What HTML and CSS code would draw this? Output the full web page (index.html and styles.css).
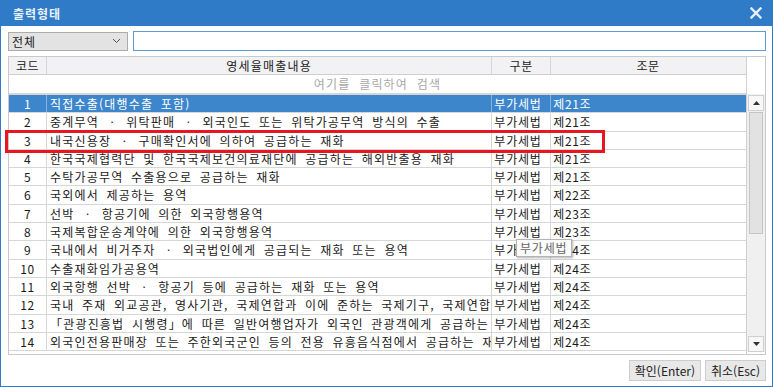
FILE: index.html
```html
<!DOCTYPE html>
<html lang="ko">

<head>
  <meta charset="UTF-8">
  <meta name="viewport" content="width=device-width, initial-scale=1.0">
  <title>출력형태</title>
  <link rel="stylesheet" href="styles.css">
</head>

<body>
  <div class="window">
    <div class="titlebar">
      <span class="title">출력형태</span>
      <svg class="close" width="12" height="12" viewBox="0 0 12 12">
        <path d="M1.5 1.5 L10.5 10.5 M10.5 1.5 L1.5 10.5" stroke="#e4eef8" stroke-width="2.4" stroke-linecap="square" />
      </svg>
    </div>

    <div class="body">
      <div class="toolbar">
        <div class="select">
          <span>전체</span>
          <svg width="9" height="6" viewBox="0 0 9 6">
            <path d="M1 1 L4.5 4.5 L8 1" fill="none" stroke="#555" stroke-width="1" />
          </svg>
        </div>
        <div class="search-input"></div>
      </div>

      <div class="grid">
        <div class="grid-main">
          <div class="row head">
            <div class="cell c-code">코드</div>
            <div class="cell c-name center">영세율매출내용</div>
            <div class="cell c-type center">구분</div>
            <div class="cell c-law center">조문</div>
          </div>
          <div class="row filter">여기를 클릭하여 검색</div>

          <div class="row selected">
            <div class="cell c-code">1</div>
            <div class="cell c-name">직접수출(대행수출 포함)</div>
            <div class="cell c-type">부가세법</div>
            <div class="cell c-law">제21조</div>
          </div>
          <div class="row">
            <div class="cell c-code">2</div>
            <div class="cell c-name">중계무역 ㆍ 위탁판매 ㆍ 외국인도 또는 위탁가공무역 방식의 수출</div>
            <div class="cell c-type">부가세법</div>
            <div class="cell c-law">제21조</div>
          </div>
          <div class="row">
            <div class="cell c-code">3</div>
            <div class="cell c-name">내국신용장 ㆍ 구매확인서에 의하여 공급하는 재화</div>
            <div class="cell c-type">부가세법</div>
            <div class="cell c-law">제21조</div>
          </div>
          <div class="row">
            <div class="cell c-code">4</div>
            <div class="cell c-name">한국국제협력단 및 한국국제보건의료재단에 공급하는 해외반출용 재화</div>
            <div class="cell c-type">부가세법</div>
            <div class="cell c-law">제21조</div>
          </div>
          <div class="row">
            <div class="cell c-code">5</div>
            <div class="cell c-name">수탁가공무역 수출용으로 공급하는 재화</div>
            <div class="cell c-type">부가세법</div>
            <div class="cell c-law">제21조</div>
          </div>
          <div class="row">
            <div class="cell c-code">6</div>
            <div class="cell c-name">국외에서 제공하는 용역</div>
            <div class="cell c-type">부가세법</div>
            <div class="cell c-law">제22조</div>
          </div>
          <div class="row">
            <div class="cell c-code">7</div>
            <div class="cell c-name">선박 ㆍ 항공기에 의한 외국항행용역</div>
            <div class="cell c-type">부가세법</div>
            <div class="cell c-law">제23조</div>
          </div>
          <div class="row">
            <div class="cell c-code">8</div>
            <div class="cell c-name">국제복합운송계약에 의한 외국항행용역</div>
            <div class="cell c-type">부가세법</div>
            <div class="cell c-law">제23조</div>
          </div>
          <div class="row">
            <div class="cell c-code">9</div>
            <div class="cell c-name">국내에서 비거주자 ㆍ 외국법인에게 공급되는 재화 또는 용역</div>
            <div class="cell c-type">부가세법</div>
            <div class="cell c-law">제24조</div>
          </div>
          <div class="row">
            <div class="cell c-code">10</div>
            <div class="cell c-name">수출재화임가공용역</div>
            <div class="cell c-type">부가세법</div>
            <div class="cell c-law">제24조</div>
          </div>
          <div class="row">
            <div class="cell c-code">11</div>
            <div class="cell c-name">외국항행 선박 ㆍ 항공기 등에 공급하는 재화 또는 용역</div>
            <div class="cell c-type">부가세법</div>
            <div class="cell c-law">제24조</div>
          </div>
          <div class="row">
            <div class="cell c-code">12</div>
            <div class="cell c-name">국내 주재 외교공관, 영사기관, 국제연합과 이에 준하는 국제기구, 국제연합군 또는 미국군에게 공급하는 재화 또는 용역</div>
            <div class="cell c-type">부가세법</div>
            <div class="cell c-law">제24조</div>
          </div>
          <div class="row">
            <div class="cell c-code">13</div>
            <div class="cell c-name">「관광진흥법 시행령」에 따른 일반여행업자가 외국인 관광객에게 공급하는 관광알선용역</div>
            <div class="cell c-type">부가세법</div>
            <div class="cell c-law">제24조</div>
          </div>
          <div class="row">
            <div class="cell c-code">14</div>
            <div class="cell c-name">외국인전용판매장 또는 주한외국군인 등의 전용 유흥음식점에서 공급하는 재화 또는 용역</div>
            <div class="cell c-type">부가세법</div>
            <div class="cell c-law">제24조</div>
          </div>
        </div>

        <div class="grid-side">
          <div class="vscroll">
            <div class="sb-btn">
              <svg width="7" height="4" viewBox="0 0 7 4"><path d="M0 4 L3.5 0 L7 4 Z" fill="#333" /></svg>
            </div>
            <div class="sb-track">
              <div class="sb-thumb"></div>
            </div>
            <div class="sb-btn">
              <svg width="7" height="4" viewBox="0 0 7 4"><path d="M0 0 L7 0 L3.5 4 Z" fill="#333" /></svg>
            </div>
          </div>
        </div>
      </div>

      <div class="footer">
        <div class="btn">확인(Enter)</div>
        <div class="btn">취소(Esc)</div>
      </div>
    </div>

    <!-- red highlight over row 3 -->
    <div class="highlight"></div>
    <div class="tooltip">부가세법</div>
  </div>
</body>

</html>
```

FILE: styles.css
```css
* {
  box-sizing: border-box;
}

body {
  margin: 0;
  font-family: "Noto Sans CJK KR", "Noto Sans", sans-serif;
  font-size: 12px;
  color: #1a1a1a;
  background: #ffffff;
}

.window {
  position: relative;
  width: 773px;
  height: 387px;
  border: 1px solid #2f7bc8;
  border-top: none;
  background: #ffffff;
  display: flex;
  flex-direction: column;
}

.titlebar {
  height: 26px;
  margin: 0 -1px;
  background: #2f7bc8;
  display: flex;
  align-items: center;
  justify-content: space-between;
  padding: 0 11px 0 13px;
}

.title {
  color: #e8f0fa;
  font-size: 12px;
  font-weight: bold;
  letter-spacing: 1px;
}

.close {
  display: block;
}

.body {
  flex: 1;
  display: flex;
  flex-direction: column;
  padding: 5px 6px 0 7px;
}

.toolbar {
  display: flex;
  align-items: center;
  gap: 5px;
  height: 20px;
}

.select {
  width: 120px;
  height: 19px;
  background: #e3e3e3;
  border: 1px solid #acacac;
  display: flex;
  align-items: center;
  justify-content: space-between;
  padding: 0 6px 0 3px;
  font-size: 12px;
  line-height: 17px;
  letter-spacing: 1px;
}

.select svg {
  display: block;
}

.search-input {
  flex: 1;
  height: 20px;
  border: 1px solid #5b9bd8;
  background: #ffffff;
}

.grid {
  margin-top: 5px;
  display: flex;
  border: 1px solid #c9c9c9;
  height: 299px;
}

.grid-main {
  width: 738px;
  border-right: 1px solid #d0d0d0;
}

.grid-side {
  flex: 1;
  padding-top: 37px;
  padding-bottom: 2px;
  display: flex;
  flex-direction: column;
}

.row {
  display: flex;
  height: 18.3px;
  border-bottom: 1px solid #d6d6d6;
  line-height: 17px;
  white-space: nowrap;
  letter-spacing: 1.2px;
  word-spacing: 3px;
}

.row.head {
  height: 18px;
  background: #f2f2f4;
  border-bottom: 1px solid #cfcfcf;
  color: #222;
}

.row.filter {
  height: 20px;
  justify-content: center;
  color: #a8a8a8;
  border-bottom: 2px solid #d6d6d6;
  word-spacing: 4px;
}

.row.selected {
  background: #3d86cc;
  color: #ffffff;
}

.row.selected .cell {
  border-right-color: #86b2de;
}

.cell {
  overflow: hidden;
  border-right: 1px solid #d6d6d6;
  padding: 0 3px;
}

.c-code {
  width: 38px;
  text-align: center;
  padding: 0;
  letter-spacing: 0.5px;
}

.c-name {
  width: 446px;
}

.c-type {
  width: 59px;
  padding: 0 2px;
  letter-spacing: 0.8px;
}

.c-law {
  width: 195px;
  border-right: none;
  padding-left: 2px;
  letter-spacing: 0.6px;
}

.center {
  text-align: center;
}

.vscroll {
  flex: 1;
  display: flex;
  flex-direction: column;
  background: #f0f0f0;
  padding: 1px 1px 0 1px;
}

.sb-btn {
  height: 16px;
  border: 1px solid #cfcfcf;
  background: #f7f7f7;
  display: flex;
  align-items: center;
  justify-content: center;
}

.sb-btn svg {
  display: block;
}

.sb-track {
  flex: 1;
  padding: 1px 1px;
}

.sb-thumb {
  height: 122px;
  border: 1px solid #c4c4c4;
  background: #e2e2e2;
}

.footer {
  margin-top: 5px;
  display: flex;
  justify-content: flex-end;
  gap: 4px;
}

.btn {
  height: 21px;
  padding: 0 5px;
  border: 1px solid #cdcdcd;
  background: #e8e8e8;
  line-height: 19px;
  color: #222;
  font-size: 12px;
}

.highlight {
  position: absolute;
  left: 4px;
  top: 130px;
  width: 600px;
  height: 23px;
  border: 3px solid #e8161e;
  pointer-events: none;
}

.tooltip {
  position: absolute;
  left: 515px;
  top: 239px;
  width: 56px;
  height: 18px;
  background: #fbfbfb;
  border: 1px solid #b4b4b4;
  box-shadow: 1px 1px 2px rgba(0, 0, 0, 0.3);
  color: #666;
  font-size: 12px;
  line-height: 15px;
  padding-left: 3px;
  letter-spacing: 0.8px;
}
```
